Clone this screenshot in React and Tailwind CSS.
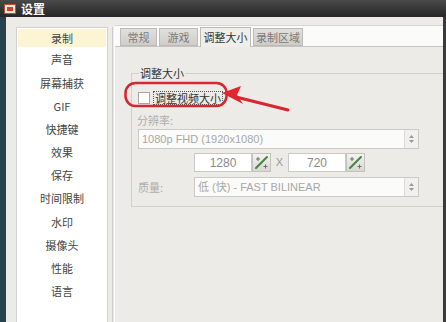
const FONT = { fontFamily: '"Noto Sans CJK SC", "Liberation Sans", sans-serif' }

const MENU = ['声音', '屏幕捕获', 'GIF', '快捷键', '效果', '保存', '时间限制', '水印', '摄像头', '性能', '语言']

function Spinner() {
  return (
    <svg width="7" height="10" viewBox="0 0 7 10" aria-hidden="true">
      <path d="M3.5 1 L6 4 L1 4 Z" fill="#9a9a9a" />
      <path d="M3.5 9 L6 6 L1 6 Z" fill="#9a9a9a" />
    </svg>
  )
}

function RatioButton() {
  return (
    <div className="w-[19px] h-[19px] border border-[#c4c2be] bg-gradient-to-b from-[#f4f3f1] to-[#d9d7d3] flex items-center justify-center">
      <svg width="15" height="15" viewBox="0 0 15 15" aria-hidden="true">
        <path d="M2 13 L13 2" stroke="#3f8a3a" strokeWidth="2" strokeLinecap="round" />
        <path d="M2 4 H6 M4 2 V6" stroke="#5a7d58" strokeWidth="1" />
        <path d="M9.5 11.5 H13.5 M11.5 9.5 V13.5" stroke="#5a7d58" strokeWidth="1" />
      </svg>
    </div>
  )
}

function Select({ text, className }) {
  return (
    <div className={`h-[20px] bg-[#fbfbfa] border border-[#cbc9c5] flex items-center ${className}`}>
      <span className="flex-1 pl-[3px] text-[11px] text-[#a8a8a8] whitespace-nowrap" style={{ fontFamily: '"Liberation Sans", "Noto Sans CJK SC", sans-serif' }}>{text}</span>
      <div className="w-[14px] h-full border-l border-[#dcdad6] bg-[#f1f0ee] flex items-center justify-center">
        <Spinner />
      </div>
    </div>
  )
}

function NumberBox({ value }) {
  return (
    <div className="flex items-center">
      <div className="w-[58px] h-[19px] bg-white border border-[#cbc9c5] flex items-center justify-center text-[12px] text-[#8a8a8a]" style={{ fontFamily: '"Liberation Sans", sans-serif' }}>
        {value}
      </div>
      <RatioButton />
    </div>
  )
}

function Tab({ label, active, width }) {
  if (active) {
    return (
      <div className={`h-[20px] ${width} bg-[#efeeeb] border border-b-0 border-[#bdbbb7] flex items-center justify-center text-[11px] text-[#333] relative top-[1px]`}>
        {label}
      </div>
    )
  }
  return (
    <div className={`h-[18px] ${width} bg-gradient-to-b from-[#e2e0dc] to-[#cfcdc9] border border-[#bdbbb7] flex items-center justify-center text-[11px] text-[#7a7a7a]`}>
      {label}
    </div>
  )
}

export default function App() {
  return (
    <div className="w-[446px] h-[322px] overflow-hidden flex flex-col bg-[#1f1f1f]" style={FONT}>
      {/* title bar */}
      <div className="h-[17px] flex-none flex items-center gap-[5px] pl-[4px] bg-gradient-to-b from-[#4a4a4a] to-[#262626]">
        <div className="w-[12px] h-[10px] bg-[#f1e7e0] border border-[#c74a3a] flex items-center justify-center">
          <div className="w-[6px] h-[4px] bg-[#d0402e]" />
        </div>
        <span className="text-[12px] font-bold text-white leading-none">设置</span>
      </div>

      {/* window body */}
      <div className="flex-1 flex bg-[#edebe7] border-l-[6px] border-l-[#27424c] border-r-[3px] border-r-[#3a3a3a] pt-[10px] pl-[10px]">
        {/* sidebar */}
        <div className="w-[92px] flex-none bg-white border border-[#d3d1cd] border-b-0 pt-[1px] px-[1px] text-[11px] text-[#444]">
          <div className="h-[18px] bg-[#fcf4d3] flex items-center justify-center">录制</div>
          <div className="mt-[1px]">
            {MENU.map((m) => (
              <div key={m} className="h-[23.2px] flex items-center justify-center">{m}</div>
            ))}
          </div>
        </div>

        {/* separator */}
        <div className="w-[3px] ml-[4px] flex-none border-l border-[#cfcdc9] border-r border-r-white" />

        {/* tab area */}
        <div className="flex-1 flex flex-col -mt-[2px]">
          <div className="h-[22px] flex-none flex items-end gap-[2px] pl-[5px] bg-[#fbfbfa] border-t border-[#d8d6d2] border-b border-b-[#c6c4c0]">
            <Tab label="常规" width="w-[37px]" />
            <Tab label="游戏" width="w-[39px]" />
            <Tab label="调整大小" width="w-[51px]" active />
            <Tab label="录制区域" width="w-[50px]" />
          </div>

          <div className="flex-1 relative pl-[16px] pt-[18px]">
            <fieldset className="border border-[#d2d0cc] border-r-0 h-[142px] pl-[5px] pr-[24px]">
              <legend className="ml-[2px] px-[1px] text-[11px] text-[#333]">调整大小</legend>
              <div className="flex items-center mt-[9px] ml-[1px]">
                <div className="w-[12px] h-[12px] bg-white border border-[#a9a7a3]" />
                <span className="ml-[3px] px-[1px] text-[11px] text-[#333] border border-dotted border-[#555] leading-[12px]">调整视频大小</span>
              </div>
              <div className="mt-[7px] text-[11px] text-[#b0aeab]">分辨率:</div>
              <Select text="1080p FHD (1920x1080)" className="ml-[1px] mt-[1px]" />
              <div className="flex items-center mt-[4px] ml-[57px]">
                <NumberBox value="1280" />
                <span className="w-[17px] text-center text-[11px] text-[#9a9a9a]" style={{ fontFamily: '"Liberation Sans", sans-serif' }}>X</span>
                <NumberBox value="720" />
              </div>
              <div className="flex items-center mt-[5px]">
                <span className="w-[57px] pl-[1px] text-[11px] text-[#b0aeab]">质量:</span>
                <Select text="低 (快) - FAST BILINEAR" className="flex-1" />
              </div>
            </fieldset>

            {/* red annotation */}
            <svg className="absolute left-[9px] top-[34px] pointer-events-none" width="180" height="34" viewBox="0 0 180 34" aria-hidden="true">
              <rect x="1.5" y="2" width="101" height="23" rx="10" fill="none" stroke="#d62630" strokeWidth="2.5" />
              <path d="M164 29 L108 15" stroke="#d62630" strokeWidth="3" strokeLinecap="round" />
              <path d="M98 12 L117 5 L113 14 L119 23 Z" fill="#e0262f" />
            </svg>
          </div>
        </div>
      </div>
    </div>
  )
}
